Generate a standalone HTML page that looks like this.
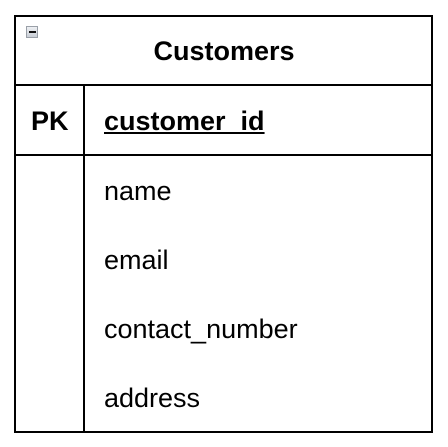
<!DOCTYPE html>
<html><head><meta charset="utf-8"><style>
body{margin:0;width:448px;height:447px;background:#fff;position:relative;overflow:hidden;font-family:"Liberation Sans",Arial,sans-serif;color:#000}
.l{position:absolute;background:#000}
.t{position:absolute;font-size:27px;line-height:1;white-space:nowrap}
</style></head><body>
<div class="l" style="left:14px;top:15px;width:419px;height:2px"></div>
<div class="l" style="left:14px;top:431px;width:419px;height:2px"></div>
<div class="l" style="left:14px;top:15px;width:2px;height:418px"></div>
<div class="l" style="left:431px;top:15px;width:2px;height:418px"></div>
<div class="l" style="left:14px;top:84px;width:419px;height:2px"></div>
<div class="l" style="left:14px;top:154px;width:419px;height:2px"></div>
<div class="l" style="left:83px;top:85px;width:2px;height:347px"></div>
<div style="position:absolute;left:26px;top:26px;width:12px;height:12px;box-sizing:border-box;border:1px solid #9aa0a8;background:linear-gradient(#eef0f3,#c9ced6)"><div style="position:absolute;left:2px;top:4px;width:7px;height:2px;background:#111"></div></div>
<div class="t" style="left:0;width:448px;text-align:center;top:38px;font-weight:bold">Customers</div>
<div class="t" style="left:31px;top:108px;font-weight:bold">PK</div>
<div class="t" style="left:104px;top:108px;font-weight:bold;text-decoration:underline">customer_id</div>
<div class="t" style="left:104px;top:178px">name</div>
<div class="t" style="left:104px;top:247px">email</div>
<div class="t" style="left:104px;top:316px">contact_number</div>
<div class="t" style="left:104px;top:385px">address</div>
</body></html>
